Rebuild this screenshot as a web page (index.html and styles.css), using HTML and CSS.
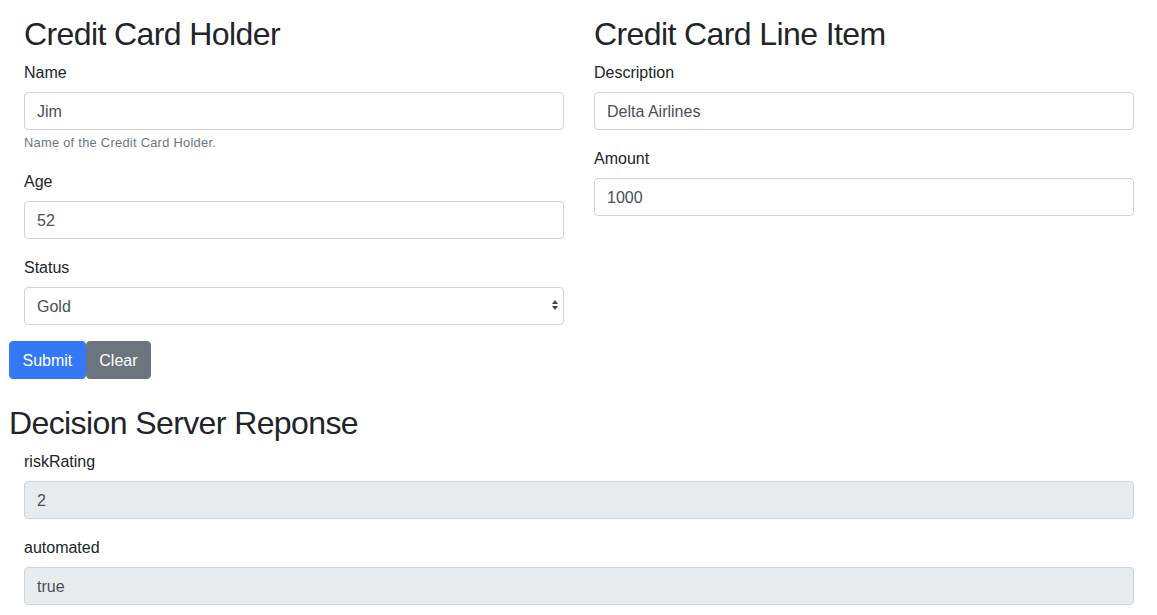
FILE: index.html
```html
<!DOCTYPE html>
<html>
<head>
<meta charset="utf-8">
<link rel="stylesheet" href="styles.css">
</head>
<body>
<div class="page">
  <form class="card-form">
    <div class="row">
      <div class="col">
        <h2 class="heading">Credit Card Holder</h2>
        <div class="form-group">
          <label class="label">Name</label>
          <input class="control" type="text" value="Jim">
          <small class="help">Name of the Credit Card Holder.</small>
        </div>
        <div class="form-group">
          <label class="label">Age</label>
          <input class="control" type="text" value="52">
        </div>
        <div class="form-group">
          <label class="label">Status</label>
          <div class="select-wrap">
            <select class="control select">
              <option>Gold</option>
              <option>Silver</option>
            </select>
            <svg class="select-arrows" width="6" height="10" viewBox="0 0 6 10"><path d="M3 0 L6 4 L0 4 Z M0 6 L6 6 L3 10 Z" fill="#3f4347"/></svg>
          </div>
        </div>
      </div>
      <div class="col">
        <h2 class="heading">Credit Card Line Item</h2>
        <div class="form-group">
          <label class="label">Description</label>
          <input class="control" type="text" value="Delta Airlines">
        </div>
        <div class="form-group">
          <label class="label">Amount</label>
          <input class="control" type="text" value="1000">
        </div>
      </div>
    </div>
    <div class="buttons">
      <button type="button" class="btn btn-primary">Submit</button><button type="button" class="btn btn-secondary">Clear</button>
    </div>
  </form>
  <h2 class="heading response-heading">Decision Server Reponse</h2>
  <div class="response">
    <div class="form-group">
      <label class="label">riskRating</label>
      <input class="control" type="text" value="2" readonly>
    </div>
    <div class="form-group">
      <label class="label">automated</label>
      <input class="control" type="text" value="true" readonly>
    </div>
  </div>
</div>
</body>
</html>
```

FILE: styles.css
```css
* { box-sizing: border-box; }
html, body { margin: 0; padding: 0; background: #fff; }
body {
  font-family: "Liberation Sans", Arial, sans-serif;
  font-size: 16px;
  line-height: 1.5;
  color: #212529;
}
.page {
  width: 1140px;
  margin-left: 9px;
  padding-top: 14px;
}
.row {
  display: flex;
  gap: 30px;
  padding: 0 15px;
}
.col { flex: 1 1 0; min-width: 0; }
.heading {
  margin: 0 0 8px 0;
  padding-top: 1px;
  height: 38.4px;
  font-size: 32px;
  font-weight: 400;
  line-height: 38.4px;
  letter-spacing: -0.6px;
  color: #212529;
}
.form-group { margin-bottom: 16px; }
.label {
  display: block;
  margin-bottom: 8px;
  padding-top: 1px;
  height: 24px;
  line-height: 24px;
}
.control {
  display: block;
  width: 100%;
  height: 38px;
  padding: 7px 12px 5px;
  font-family: inherit;
  font-size: 16px;
  line-height: 24px;
  color: #495057;
  background: #fff;
  border: 1px solid #ced4da;
  border-radius: 4px;
  margin: 0;
  outline: none;
}
.control[readonly] { background: #e9ecef; }
.help {
  display: block;
  margin-top: 4px;
  height: 18.2px;
  font-size: 12.8px;
  line-height: 18.2px;
  letter-spacing: 0.3px;
  color: #6c757d;
}
.select-wrap { position: relative; }
.select { appearance: none; -webkit-appearance: none; }
.select-arrows {
  position: absolute;
  right: 6px;
  top: 13px;
  pointer-events: none;
}
.buttons { display: flex; }
.btn {
  font-family: inherit;
  font-size: 16px;
  line-height: 24px;
  padding: 7px 12.5px 5px;
  border: 1px solid transparent;
  border-radius: 4px;
  color: #fff;
  cursor: pointer;
  margin: 0;
}
.btn-primary { background: #3478f6; border-color: #3478f6; }
.btn-secondary { background: #6c757d; border-color: #6c757d; }
.response-heading { margin-top: 24px; }
.response { padding: 0 15px; }
```
